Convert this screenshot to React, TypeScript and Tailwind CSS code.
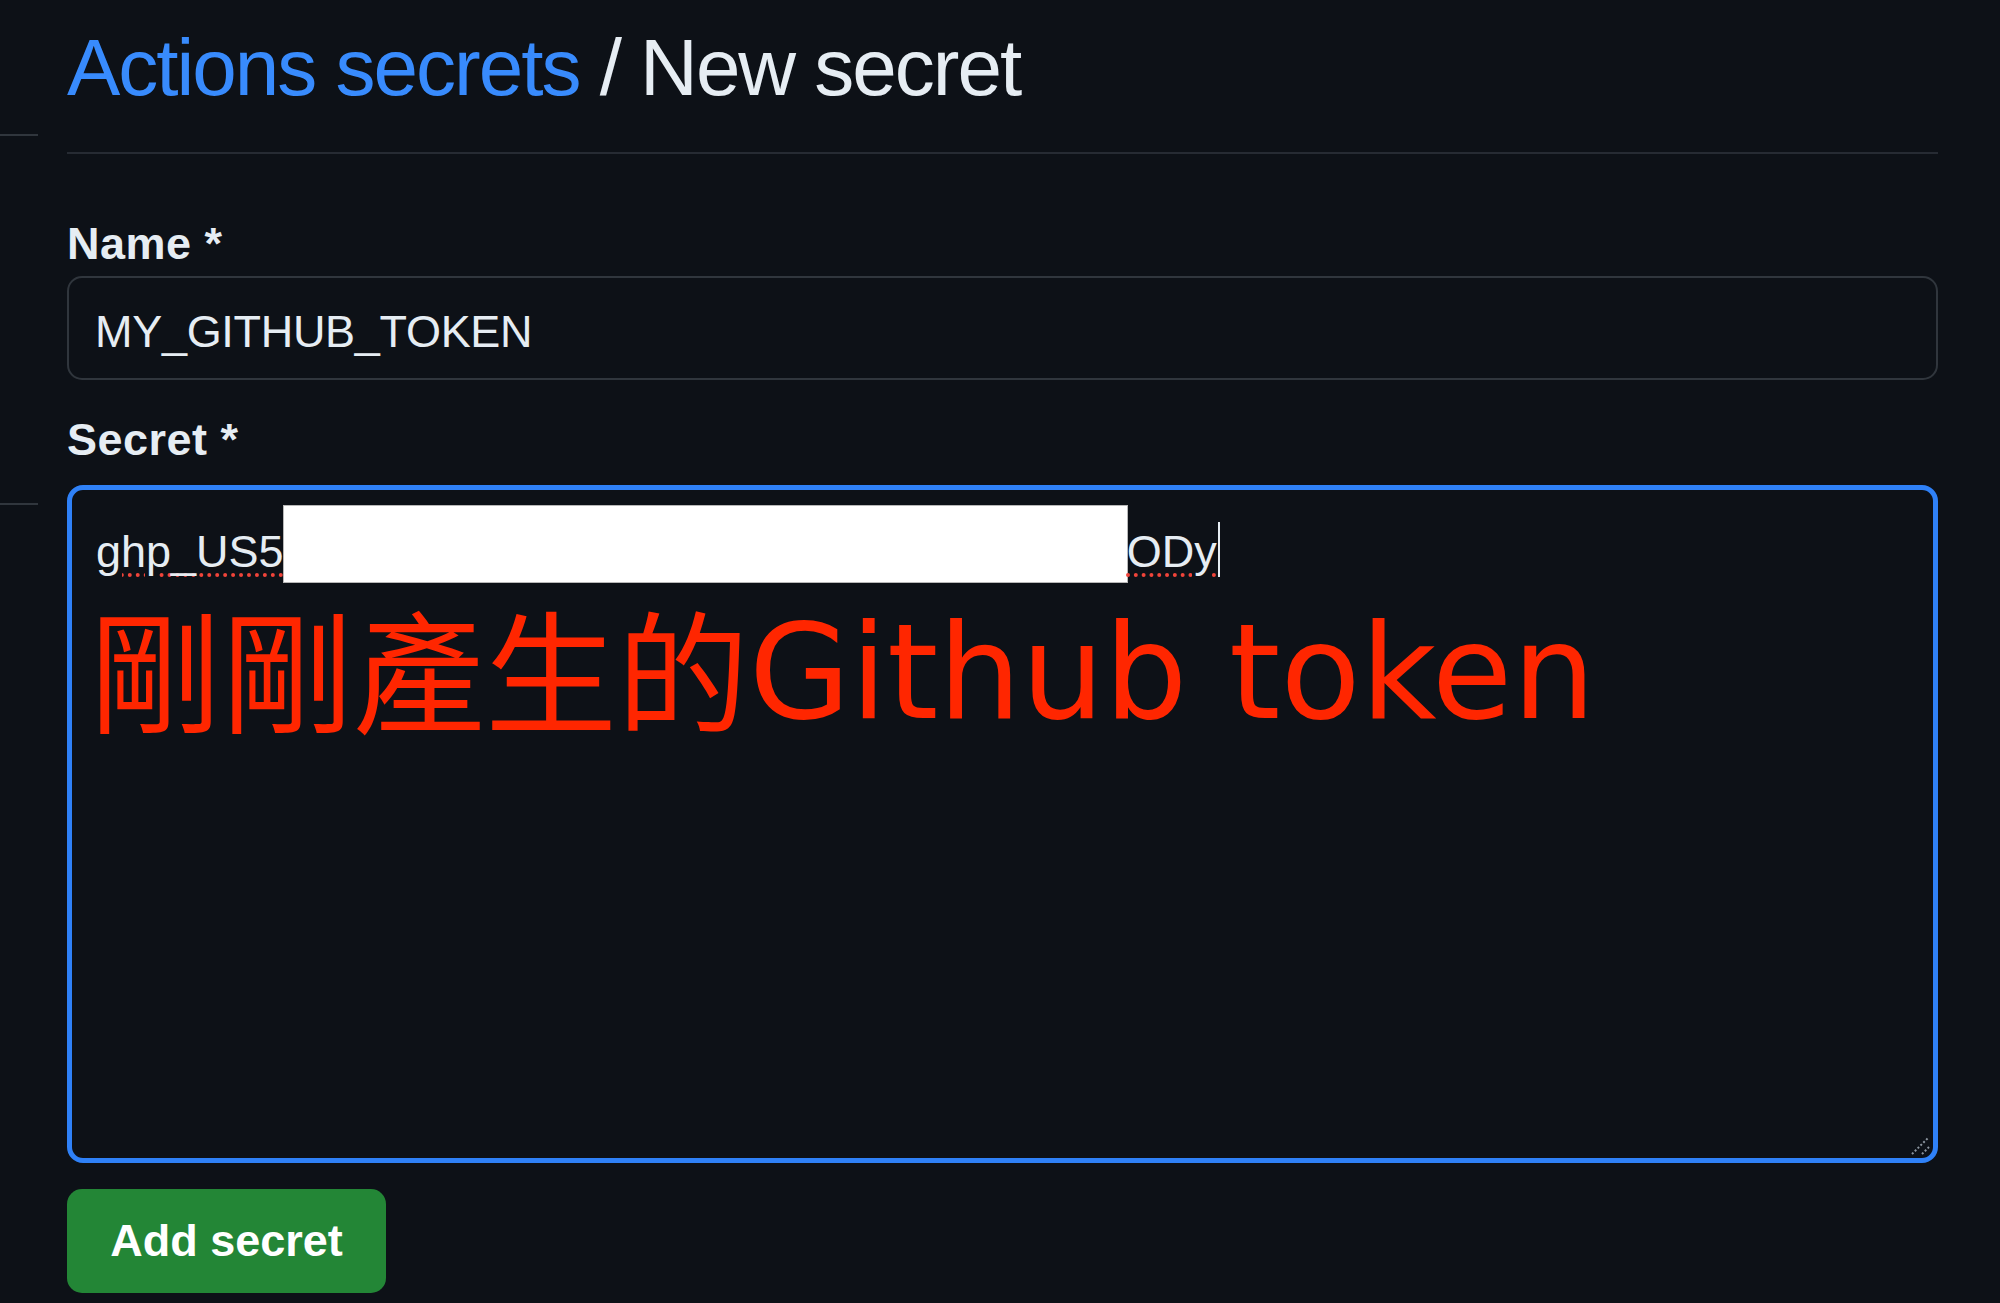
export default function App() {
  return (
    <div className="flex h-[1303px] w-[2000px] overflow-hidden bg-[#0d1117] font-['Liberation_Sans',Arial,sans-serif] text-[#e6edf3]">
      {/* left nav remnants */}
      <div className="w-[38px] shrink-0">
        <div className="mt-[134px] h-[2px] bg-[#30363d]" />
        <div className="mt-[367px] h-[2px] bg-[#30363d]" />
      </div>

      <main className="ml-[29px] w-[1871px] shrink-0">
        <div className="border-b-2 border-[#262b33] pb-[44px] pt-[28px]">
          <h2 className="whitespace-nowrap text-[80px] leading-[80px] tracking-[-2px]">
            <a className="text-[#388bfd]">Actions secrets</a>
            <span> / New secret</span>
          </h2>
        </div>

        <label className="mt-[68px] block text-[45px] font-bold leading-[44px] tracking-[0.5px]">Name *</label>
        <div className="mt-[10px] flex h-[104px] items-center rounded-[15px] border-2 border-[#30363d] px-[26px] pt-[8px] text-[45px] tracking-[-0.3px]">
          MY_GITHUB_TOKEN
        </div>

        <label className="mt-[38px] block text-[45px] font-bold leading-[44px] tracking-[0.5px]">Secret *</label>
        <div className="relative mt-[23px] h-[678px] rounded-[16px] border-[5px] border-[#2f81f7] pl-[24px] pt-[39px]">
          <div className="flex items-start whitespace-nowrap text-[45px] leading-[45px]">
            <span className="underline decoration-[#f0443a] decoration-dotted decoration-[4px] underline-offset-[6px]">ghp_US5</span>
            <span className="-mt-[23px] h-[76px] w-[843px] shrink-0 bg-white ring-1 ring-[#b8b8b8]" />
            <span className="underline decoration-[#f0443a] decoration-dotted decoration-[4px] underline-offset-[6px]">ODy</span>
            <span className="-mt-[7px] ml-[1px] h-[55px] w-[2px] bg-[#e6edf3]" />
          </div>

          {/* red annotation */}
          <div className="absolute left-[17px] top-[105px] whitespace-nowrap font-['DejaVu_Sans','Noto_Sans_CJK_TC',sans-serif] text-[131px] leading-none text-[#ff2600]">
            <span className="relative top-[5px] font-['Noto_Sans_CJK_TC',sans-serif] text-[132px]">剛剛產生的</span>
            <span>Github token</span>
          </div>

          <svg className="absolute bottom-[2px] right-[2px]" width="22" height="22" viewBox="0 0 22 22">
            <path d="M3 20 L20 3 M13 20 L20 13" stroke="#8b949e" strokeWidth="2" strokeDasharray="2 2" fill="none" />
          </svg>
        </div>

        <button className="mt-[26px] flex h-[104px] w-[319px] items-center justify-center rounded-[15px] bg-[#238636] text-[45px] font-bold text-white">
          Add secret
        </button>
      </main>
    </div>
  );
}
